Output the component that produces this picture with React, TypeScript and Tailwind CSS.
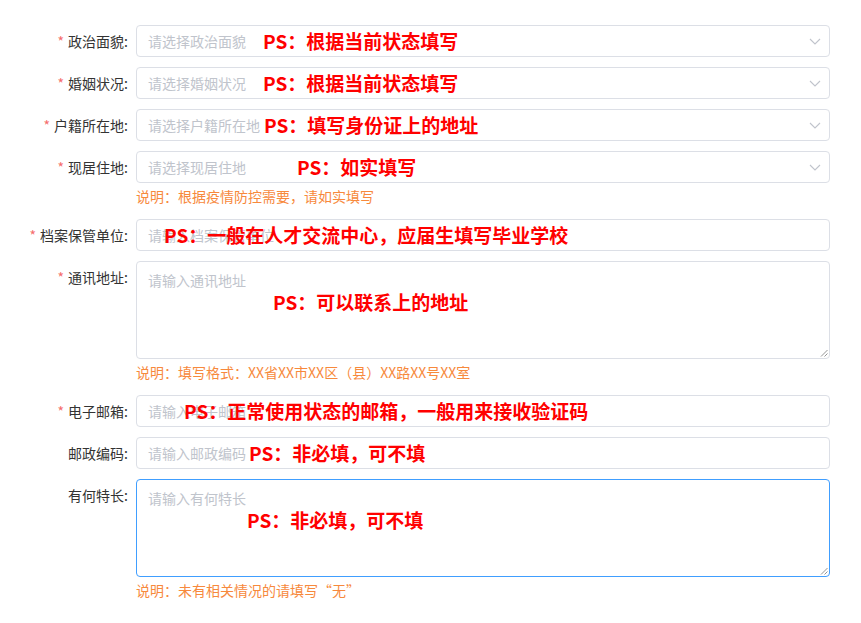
import React from "react";

type Field = {
  label: string;
  required: boolean;
  placeholder: string;
  kind: "select" | "input" | "textarea";
  ps: string;
  psLeft: string;
  hint?: string;
  focused?: boolean;
};

const fields: Field[] = [
  { label: "政治面貌", required: true, placeholder: "请选择政治面貌", kind: "select", ps: "PS：根据当前状态填写", psLeft: "left-[126px]" },
  { label: "婚姻状况", required: true, placeholder: "请选择婚姻状况", kind: "select", ps: "PS：根据当前状态填写", psLeft: "left-[126px]" },
  { label: "户籍所在地", required: true, placeholder: "请选择户籍所在地", kind: "select", ps: "PS：填写身份证上的地址", psLeft: "left-[127px]" },
  { label: "现居住地", required: true, placeholder: "请选择现居住地", kind: "select", ps: "PS：如实填写", psLeft: "left-[160px]", hint: "说明：根据疫情防控需要，请如实填写" },
  { label: "档案保管单位", required: true, placeholder: "请输入档案保管单位", kind: "input", ps: "PS：一般在人才交流中心，应届生填写毕业学校", psLeft: "left-[27px]" },
  { label: "通讯地址", required: true, placeholder: "请输入通讯地址", kind: "textarea", ps: "PS：可以联系上的地址", psLeft: "left-[136px]", hint: "说明：填写格式：XX省XX市XX区（县）XX路XX号XX室" },
  { label: "电子邮箱", required: true, placeholder: "请输入电子邮箱", kind: "input", ps: "PS：正常使用状态的邮箱，一般用来接收验证码", psLeft: "left-[47px]" },
  { label: "邮政编码", required: false, placeholder: "请输入邮政编码", kind: "input", ps: "PS：非必填，可不填", psLeft: "left-[112px]" },
  { label: "有何特长", required: false, placeholder: "请输入有何特长", kind: "textarea", ps: "PS：非必填，可不填", psLeft: "left-[110px]", hint: "说明：未有相关情况的请填写“无”", focused: true },
];

const font = { fontFamily: '"Noto Sans CJK SC", "Microsoft YaHei", sans-serif' };

function Chevron() {
  return (
    <svg width="12" height="7" viewBox="0 0 12 7" className="shrink-0">
      <polyline points="1,1 6,6 11,1" fill="none" stroke="#c0c4cc" strokeWidth="1.1" />
    </svg>
  );
}

function Resize() {
  return (
    <svg width="8" height="8" viewBox="0 0 8 8" className="absolute right-[1px] bottom-[1px]">
      <line x1="7.5" y1="1" x2="1" y2="7.5" stroke="#888" strokeWidth="0.9" />
      <line x1="7.5" y1="4.5" x2="4.5" y2="7.5" stroke="#888" strokeWidth="0.9" />
    </svg>
  );
}

function Row({ f }: { f: Field }) {
  const isTA = f.kind === "textarea";
  const border = f.focused ? "border-[#409eff]" : "border-[#dcdfe6]";
  return (
    <div className="flex">
      <div className="w-[136px] shrink-0 pr-[8px] flex justify-end items-start leading-[32px] text-[14px] text-[#333]">
        {f.required && <span className="text-[#f56c6c] mr-[4px]">*</span>}
        <span>{f.label}:</span>
      </div>
      <div className="w-[694px] shrink-0 flex flex-col">
        <div
          className={`relative bg-white border ${border} rounded-[4px] ${
            isTA ? "h-[98px] px-[11px] pt-[5px]" : "h-[32px] pl-[11px] pr-[8px] flex items-center justify-between"
          }`}
        >
          <span className="text-[14px] leading-[22px] text-[#c0c4cc] whitespace-nowrap">{f.placeholder}</span>
          {f.kind === "select" && <Chevron />}
          {isTA && <Resize />}
          <span
            className={`absolute ${f.psLeft} ${
              isTA ? "top-[27px]" : "top-[2px]"
            } text-[19px] font-bold leading-[26px] text-[#ff0000] whitespace-nowrap`}
          >
            {f.ps}
          </span>
        </div>
        {f.hint && (
          <div className="h-[26px] leading-[26px] text-[14px] text-[#f7893c] whitespace-nowrap">{f.hint}</div>
        )}
      </div>
    </div>
  );
}

export default function App() {
  return (
    <div className="w-[861px] h-[623px] bg-white pt-[25px]" style={font}>
      <div className="flex flex-col gap-[10px]">
        {fields.map((f) => (
          <Row key={f.label} f={f} />
        ))}
      </div>
    </div>
  );
}
